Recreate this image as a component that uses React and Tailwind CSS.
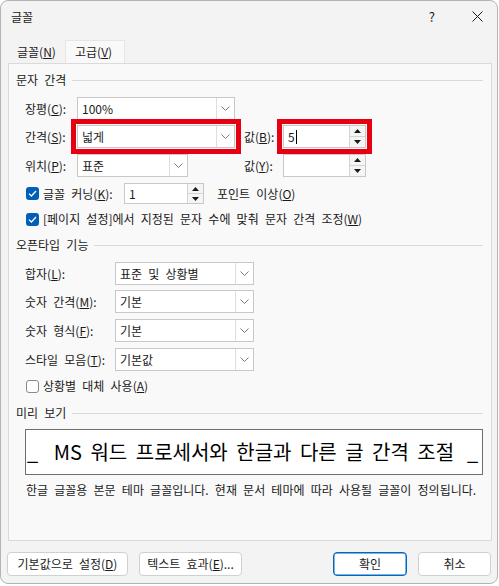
import React from "react";

const Chevron = () => (
  <svg width="9" height="5" viewBox="0 0 9 5" fill="none">
    <path d="M0.5 0.5 L4.5 4.5 L8.5 0.5" stroke="#7a7a7a" strokeWidth="1" />
  </svg>
);

function Combo({ w, value, ring }) {
  return (
    <div
      className={`flex h-[23px] items-stretch border border-[#c8c8c8] bg-white ${
        ring ? "outline-[5px] outline-offset-[1px] outline-solid outline-[#e60012]" : ""
      }`}
      style={{ width: w }}
    >
      <div className="flex flex-1 items-center pl-[4px] text-[12px] text-[#1a1a1a]">
        {value}
      </div>
      <div className="flex w-[18px] items-center justify-center border-l border-[#dedede]">
        <Chevron />
      </div>
    </div>
  );
}

function Spin({ w, value, ring, h = 23 }) {
  return (
    <div
      className={`flex items-stretch border border-[#c8c8c8] bg-white ${
        ring ? "outline-[5px] outline-offset-[1px] outline-solid outline-[#e60012]" : ""
      }`}
      style={{ width: w, height: h }}
    >
      <div className="flex flex-1 items-center pl-[4px] text-[12px] text-[#1a1a1a]">
        {value}
        {ring && <span className="ml-px h-[14px] w-px bg-black" />}
      </div>
      <div className="flex w-[16px] flex-col border-l border-[#d4d4d4] bg-[#f5f5f5]">
        <div className="flex flex-1 items-center justify-center border-b border-[#d4d4d4]">
          <svg width="7" height="4" viewBox="0 0 7 4">
            <path d="M3.5 0 L7 4 L0 4 Z" fill="#1a1a1a" />
          </svg>
        </div>
        <div className="flex flex-1 items-center justify-center">
          <svg width="7" height="4" viewBox="0 0 7 4">
            <path d="M0 0 L7 0 L3.5 4 Z" fill="#1a1a1a" />
          </svg>
        </div>
      </div>
    </div>
  );
}

function Check({ on }) {
  return on ? (
    <div className="flex h-[13px] w-[13px] items-center justify-center rounded-[3px] bg-[#005fb8]">
      <svg width="9" height="7" viewBox="0 0 9 7" fill="none">
        <path d="M1 3.6 L3.4 6 L8 1" stroke="white" strokeWidth="1.3" />
      </svg>
    </div>
  ) : (
    <div className="h-[13px] w-[13px] rounded-[3px] border border-[#8a8a8a] bg-white" />
  );
}

function Header({ children, mt }) {
  return (
    <div className={`flex h-[20px] items-center pl-[7px] pr-[8px] ${mt}`}>
      <span>{children}</span>
      <div className="ml-[6px] h-px flex-1 bg-[#d9d9d9]" />
    </div>
  );
}

function Btn({ children, w, primary }) {
  return (
    <div
      className={`flex h-[24px] items-center justify-center rounded-[4px] border bg-white text-[12px] ${
        primary ? "border-[#0067c0] shadow-[inset_0_0_0_0.5px_#0067c0]" : "border-[#d0d0d0]"
      }`}
      style={{ width: w }}
    >
      {children}
    </div>
  );
}

export default function App() {
  return (
    <div className="h-[586px] w-[499px] bg-white font-['Noto_Sans_CJK_KR','Noto_Sans',sans-serif] text-[12px] text-[#1a1a1a] [word-spacing:3.5px]">
      <div className="h-[584px] w-[498px] rounded-b-[8px] rounded-t-[8px] border border-[#b4b4b4] bg-[#f3f3f3]">
        {/* title bar */}
        <div className="flex h-[39px] items-center pb-[8px] pl-[10px]">
          <span className="flex-1">글꼴</span>
          <span className="mr-[37px] text-[13px]">?</span>
          <svg width="11" height="11" viewBox="0 0 11 11" className="mr-[14px]">
            <path d="M0.5 0.5 L10.5 10.5 M10.5 0.5 L0.5 10.5" stroke="#1a1a1a" strokeWidth="1" />
          </svg>
        </div>

        {/* tabs */}
        <div className="flex h-[23px] items-stretch pl-[7px]">
          <div className="flex w-[57px] items-center pl-[9px]">
            글꼴(<u>N</u>)
          </div>
          <div className="flex w-[60px] items-center border-x border-t border-[#e6e6e6] bg-[#f9f9f9] pl-[9px]">
            고급(<u>V</u>)
          </div>
        </div>

        {/* panel */}
        <div className="ml-[7px] flex h-[478px] w-[484px] flex-col border border-[#dadada] bg-[#f9f9f9]">
          <Header mt="mt-[6px]">문자 간격</Header>

          <div className="mt-[7px] flex h-[23px] items-center pl-[16px]">
            <span className="w-[52px]">
              장평(<u>C</u>):
            </span>
            <Combo w={158} value="100%" />
          </div>

          <div className="mt-[5px] flex h-[23px] items-center pl-[16px]">
            <span className="w-[52px]">
              간격(<u>S</u>):
            </span>
            <Combo w={158} value="넓게" ring />
            <span className="ml-[9px] w-[39px]">
              값(<u>B</u>):
            </span>
            <Spin w={83} value="5" ring />
          </div>

          <div className="mt-[6px] flex h-[23px] items-center pl-[16px]">
            <span className="w-[52px]">
              위치(<u>P</u>):
            </span>
            <Combo w={111} value="표준" />
            <span className="ml-[56px] w-[39px]">
              값(<u>Y</u>):
            </span>
            <Spin w={83} value="" />
          </div>

          <div className="mt-[6px] flex h-[21px] items-center pl-[17px]">
            <Check on />
            <span className="ml-[4px] w-[81px]">
              글꼴 커닝(<u>K</u>):
            </span>
            <Spin w={80} value="1" h={21} />
            <span className="ml-[13px]">
              포인트 이상(<u>O</u>)
            </span>
          </div>

          <div className="mt-[5px] flex h-[20px] items-center pl-[17px]">
            <Check on />
            <span className="ml-[4px]">
              [페이지 설정]에서 지정된 문자 수에 맞춰 문자 간격 조정(<u>W</u>)
            </span>
          </div>

          <Header mt="mt-[6px]">오픈타입 기능</Header>

          {[
            ["합자", "L", "표준 및 상황별", "mt-[7px]"],
            ["숫자 간격", "M", "기본", "mt-[5px]"],
            ["숫자 형식", "F", "기본", "mt-[6px]"],
            ["스타일 모음", "T", "기본값", "mt-[6px]"],
          ].map(([label, key, value, mt]) => (
            <div key={key} className={`flex h-[23px] items-center pl-[16px] ${mt}`}>
              <span className="w-[90px]">
                {label}(<u>{key}</u>):
              </span>
              <Combo w={139} value={value} />
            </div>
          ))}

          <div className="mt-[5px] flex h-[20px] items-center pl-[17px]">
            <Check />
            <span className="ml-[4px]">
              상황별 대체 사용(<u>A</u>)
            </span>
          </div>

          <Header mt="mt-[7px]">미리 보기</Header>

          <div className="ml-[16px] mt-[6px] flex h-[46px] w-[458px] items-center justify-between border border-[#6e6e6e] bg-white px-[1px] text-[20px] leading-none text-black [word-spacing:4px]">
            <span className="w-[14px]">_</span>
            <span>MS 워드 프로세서와 한글과 다른 글 간격 조절</span>
            <span className="w-[14px]">_</span>
          </div>

          <div className="mt-[5px] flex h-[20px] items-center pl-[17px]">
            한글 글꼴용 본문 테마 글꼴입니다. 현재 문서 테마에 따라 사용될 글꼴이 정의됩니다.
          </div>
        </div>

        {/* buttons */}
        <div className="mt-[11px] flex h-[24px] items-center pl-[6px]">
          <Btn w={121}>
            기본값으로 설정(<u>D</u>)
          </Btn>
          <div className="ml-[11px]">
            <Btn w={103}>
              텍스트 효과(<u>E</u>)...
            </Btn>
          </div>
          <div className="ml-[91px]">
            <Btn w={74} primary>
              확인
            </Btn>
          </div>
          <div className="ml-[11px]">
            <Btn w={73}>취소</Btn>
          </div>
        </div>
      </div>
    </div>
  );
}
